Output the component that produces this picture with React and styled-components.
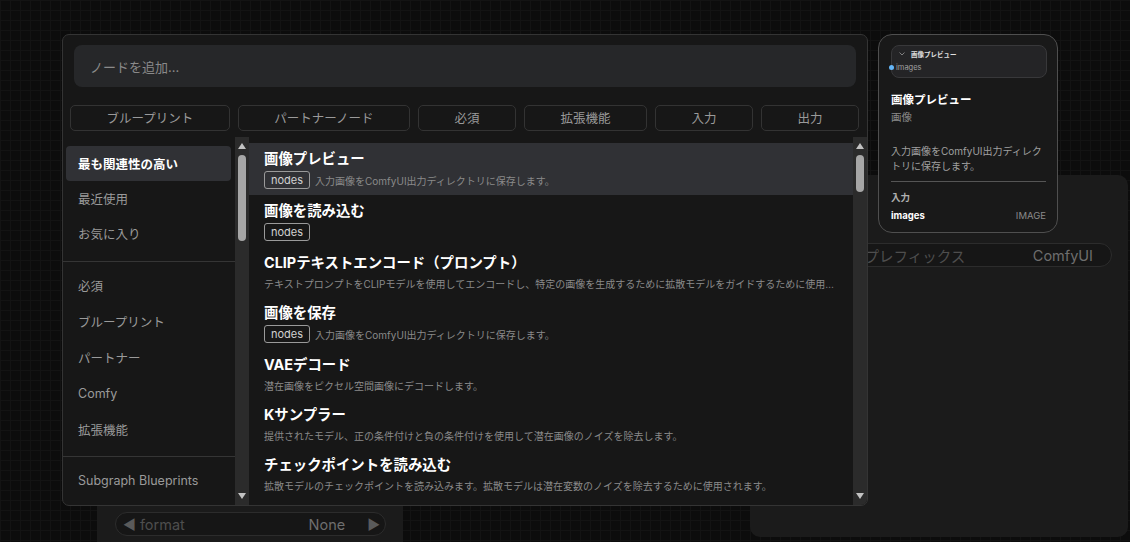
import styled, { createGlobalStyle } from 'styled-components';

const GlobalStyle = createGlobalStyle`
  html, body {
    margin: 0;
    padding: 0;
  }
  body {
    background-color: #0c0c0c;
    background-image:
      linear-gradient(#131313 1px, transparent 1px),
      linear-gradient(90deg, #131313 1px, transparent 1px);
    background-size: 10px 10px;
    font-family: Inter, "Noto Sans CJK JP", sans-serif;
    overflow: hidden;
  }
`;

const categoriesTop = ['最も関連性の高い', '最近使用', 'お気に入り'];
const categoriesMid = ['必須', 'ブループリント', 'パートナー', 'Comfy', '拡張機能'];
const filters = ['ブループリント', 'パートナーノード', '必須', '拡張機能', '入力', '出力'];

const results = [
  { title: '画像プレビュー', tag: 'nodes', desc: '入力画像をComfyUI出力ディレクトリに保存します。', active: true },
  { title: '画像を読み込む', tag: 'nodes' },
  {
    title: 'CLIPテキストエンコード（プロンプト）',
    desc: 'テキストプロンプトをCLIPモデルを使用してエンコードし、特定の画像を生成するために拡散モデルをガイドするために使用できます。',
  },
  { title: '画像を保存', tag: 'nodes', desc: '入力画像をComfyUI出力ディレクトリに保存します。' },
  { title: 'VAEデコード', desc: '潜在画像をピクセル空間画像にデコードします。' },
  { title: 'Kサンプラー', desc: '提供されたモデル、正の条件付けと負の条件付けを使用して潜在画像のノイズを除去します。' },
  {
    title: 'チェックポイントを読み込む',
    desc: '拡散モデルのチェックポイントを読み込みます。拡散モデルは潜在変数のノイズを除去するために使用されます。',
  },
];

const App = () => {
  return (
    <>
      <GlobalStyle />
      <Canvas>
        {/* nodes sitting on the graph behind the dialog */}
        <GraphNode $left={750} $top={175} $width={378} $height={362}>
          <WidgetPill $top={68} $left={34} $right={16}>
            <WidgetLabel>ファイル名プレフィックス</WidgetLabel>
            <WidgetValue>ComfyUI</WidgetValue>
          </WidgetPill>
        </GraphNode>
        <GraphNode $left={97} $top={470} $width={306} $height={100}>
          <WidgetPill $top={42} $left={18} $right={17}>
            <WidgetLabel>
              <Arrow>◀</Arrow> format
            </WidgetLabel>
            <WidgetValue $tight>
              None
              <Arrow>▶</Arrow>
            </WidgetValue>
          </WidgetPill>
        </GraphNode>

        <Dialog>
          <SearchBox>ノードを追加...</SearchBox>
          <FilterRow>
            {filters.map(f => (
              <FilterButton key={f}>{f}</FilterButton>
            ))}
          </FilterRow>
          <Body>
            <Sidebar>
              <CategoryGroup $top={9} $bottom={10} $gap={0}>
                {categoriesTop.map((c, i) => (
                  <CategoryItem key={c} $active={i === 0}>
                    {c}
                  </CategoryItem>
                ))}
              </CategoryGroup>
              <CategoryGroup $top={6} $bottom={9} $gap={1}>
                {categoriesMid.map(c => (
                  <CategoryItem key={c}>{c}</CategoryItem>
                ))}
              </CategoryGroup>
              <CategoryGroup $top={6} $bottom={0} $gap={0} $last>
                <CategoryItem>Subgraph Blueprints</CategoryItem>
              </CategoryGroup>
            </Sidebar>
            <ScrollTrack>
              <ArrowUp />
              <Thumb $height={86} />
              <Spacer />
              <ArrowDown />
            </ScrollTrack>
            <ResultList>
              {results.map(r => (
                <ResultItem key={r.title} $active={r.active}>
                  <ResultTitle>{r.title}</ResultTitle>
                  {(r.tag || r.desc) && (
                    <ResultMeta $tall={!!r.tag}>
                      {r.tag && <Tag>{r.tag}</Tag>}
                      {r.desc && <ResultDesc>{r.desc}</ResultDesc>}
                    </ResultMeta>
                  )}
                </ResultItem>
              ))}
            </ResultList>
            <ScrollTrack>
              <ArrowUp />
              <Thumb $height={37} />
              <Spacer />
              <ArrowDown />
            </ScrollTrack>
          </Body>
        </Dialog>

        <PreviewPanel>
          <MiniNode>
            <MiniHeader>
              <svg width="6" height="4" viewBox="0 0 6 4">
                <path d="M0.5 0.5 L3 3 L5.5 0.5" stroke="#8a8a8a" strokeWidth="0.9" fill="none" />
              </svg>
              <span>画像プレビュー</span>
            </MiniHeader>
            <MiniSlot>
              <SlotDot />
              <span>images</span>
            </MiniSlot>
          </MiniNode>
          <PreviewTitle>画像プレビュー</PreviewTitle>
          <PreviewCategory>画像</PreviewCategory>
          <PreviewDesc>入力画像をComfyUI出力ディレクトリに保存します。</PreviewDesc>
          <PreviewDivider />
          <PreviewSection>入力</PreviewSection>
          <InputRow>
            <InputName>images</InputName>
            <InputType>IMAGE</InputType>
          </InputRow>
        </PreviewPanel>
      </Canvas>
    </>
  );
};

const Canvas = styled.div`
  position: relative;
  width: 1130px;
  height: 542px;
  overflow: hidden;
`;

const GraphNode = styled.div`
  position: absolute;
  left: ${({ $left }) => $left}px;
  top: ${({ $top }) => $top}px;
  width: ${({ $width }) => $width}px;
  height: ${({ $height }) => $height}px;
  background: #1b1b1b;
  border-radius: 10px;
`;

const WidgetPill = styled.div`
  position: absolute;
  top: ${({ $top }) => $top}px;
  left: ${({ $left }) => $left}px;
  right: ${({ $right }) => $right}px;
  height: 24px;
  box-sizing: border-box;
  border: 1px solid #2c2c2c;
  border-radius: 12px;
  background: #161616;
  display: flex;
  align-items: center;
  justify-content: space-between;
  padding: 0 5px 0 7px;
  font-size: 14.5px;
`;

const WidgetLabel = styled.span`
  color: #4e4e4e;
`;

const WidgetValue = styled.span`
  display: flex;
  align-items: center;
  gap: 22px;
  color: #6e6e6e;
  padding-right: ${({ $tight }) => ($tight ? 0 : 13)}px;
`;

const Arrow = styled.span`
  color: #5a5a5a;
  font-size: 14px;
`;

const Dialog = styled.div`
  position: absolute;
  left: 62px;
  top: 34px;
  width: 806px;
  height: 472px;
  box-sizing: border-box;
  background: #171717;
  border: 1px solid #343434;
  border-radius: 7px;
  display: flex;
  flex-direction: column;
  overflow: hidden;
`;

const SearchBox = styled.div`
  margin: 10px 11px 0 11px;
  height: 42px;
  background: #262729;
  border-radius: 8px;
  display: flex;
  align-items: center;
  padding: 0 16px;
  font-size: 13px;
  color: #8a8a8a;
`;

const FilterRow = styled.div`
  display: flex;
  gap: 8px;
  margin: 18px 8px 0 7px;
  height: 26px;
`;

const FilterButton = styled.div`
  flex: 1 1 auto;
  box-sizing: border-box;
  border: 1px solid #333;
  border-radius: 5px;
  display: flex;
  align-items: center;
  justify-content: center;
  padding: 0 12px 2px;
  font-size: 12.5px;
  color: #9a9a9a;
  white-space: nowrap;
`;

const Body = styled.div`
  flex: 1;
  display: flex;
  margin-top: 6px;
  min-height: 0;
`;

const Sidebar = styled.div`
  width: 172px;
  display: flex;
  flex-direction: column;
`;

const CategoryGroup = styled.div`
  padding: ${({ $top }) => $top}px 4px ${({ $bottom }) => $bottom}px 3px;
  border-bottom: ${({ $last }) => ($last ? 'none' : '1px solid #353535')};
  display: flex;
  flex-direction: column;
  gap: ${({ $gap }) => $gap}px;
`;

const CategoryItem = styled.div`
  height: 35px;
  display: flex;
  align-items: center;
  padding-left: 12px;
  border-radius: 4px;
  font-size: 12.5px;
  color: ${({ $active }) => ($active ? '#ffffff' : '#9a9a9a')};
  font-weight: ${({ $active }) => ($active ? 700 : 400)};
  background: ${({ $active }) => ($active ? '#303135' : 'transparent')};
`;

const ScrollTrack = styled.div`
  width: 14px;
  flex-shrink: 0;
  background: #2b2b2b;
  display: flex;
  flex-direction: column;
  align-items: center;
  padding: 6px 0 6px;
  box-sizing: border-box;
`;

const ArrowUp = styled.div`
  width: 0;
  height: 0;
  border-left: 4.5px solid transparent;
  border-right: 4.5px solid transparent;
  border-bottom: 6px solid #c2c2c2;
`;

const ArrowDown = styled(ArrowUp)`
  border-bottom: none;
  border-top: 6px solid #c2c2c2;
`;

const Thumb = styled.div`
  margin-top: 6px;
  width: 8px;
  height: ${({ $height }) => $height}px;
  border-radius: 4px;
  background: #a6a6a6;
`;

const Spacer = styled.div`
  flex: 1;
`;

const ResultList = styled.div`
  flex: 1;
  min-width: 0;
  padding-top: 6px;
  display: flex;
  flex-direction: column;
`;

const ResultItem = styled.div`
  padding: 6px 14px 6px 15px;
  background: ${({ $active }) => ($active ? '#303135' : 'transparent')};
  display: flex;
  flex-direction: column;
  gap: 2px;
  min-width: 0;
`;

const ResultTitle = styled.div`
  font-size: 14.4px;
  line-height: 20px;
  font-weight: 700;
  color: #ffffff;
  white-space: nowrap;
`;

const ResultMeta = styled.div`
  height: ${({ $tall }) => ($tall ? 18 : 16)}px;
  display: flex;
  align-items: center;
  gap: 5px;
  min-width: 0;
`;

const Tag = styled.span`
  flex-shrink: 0;
  box-sizing: border-box;
  height: 18px;
  display: inline-flex;
  align-items: center;
  padding: 0 6px;
  border: 1px solid #9a9a9a;
  border-radius: 3px;
  font-size: 11px;
  color: #d2d2d2;
`;

const ResultDesc = styled.span`
  font-size: 10px;
  color: #8a8a8a;
  white-space: nowrap;
  overflow: hidden;
  text-overflow: ellipsis;
  min-width: 0;
`;

const PreviewPanel = styled.div`
  position: absolute;
  left: 878px;
  top: 34px;
  width: 180px;
  height: 199px;
  box-sizing: border-box;
  background: #191919;
  border: 1px solid #4f4f4f;
  border-radius: 14px;
  padding: 10px 10px 0 12px;
  display: flex;
  flex-direction: column;
`;

const MiniNode = styled.div`
  height: 33px;
  box-sizing: border-box;
  background: #242426;
  border: 1px solid #38383a;
  border-radius: 8px;
  display: flex;
  flex-direction: column;
  padding: 3px 0 0 7px;
`;

const MiniHeader = styled.div`
  display: flex;
  align-items: center;
  gap: 6px;
  height: 10px;
  font-size: 6.5px;
  font-weight: 700;
  color: #e0e0e0;
`;

const MiniSlot = styled.div`
  display: flex;
  align-items: center;
  gap: 2px;
  margin: 4px 0 0 -10px;
  font-size: 7.5px;
  color: #a0a0a0;
`;

const SlotDot = styled.span`
  width: 5px;
  height: 5px;
  border-radius: 50%;
  background: #64b5f6;
`;

const PreviewTitle = styled.div`
  margin-top: 14px;
  font-size: 11.5px;
  line-height: 16px;
  font-weight: 700;
  color: #ffffff;
`;

const PreviewCategory = styled.div`
  margin-top: 3px;
  font-size: 10.5px;
  line-height: 14px;
  color: #8a8a8a;
`;

const PreviewDesc = styled.div`
  margin-top: 19px;
  font-size: 10px;
  line-height: 15px;
  color: #a0a0a0;
  padding-right: 4px;
`;

const PreviewDivider = styled.div`
  margin-top: 7px;
  height: 1px;
  background: #555;
  margin-right: 1px;
`;

const PreviewSection = styled.div`
  margin-top: 9px;
  font-size: 9.5px;
  line-height: 14px;
  font-weight: 700;
  color: #b0b0b0;
`;

const InputRow = styled.div`
  margin-top: 4px;
  display: flex;
  justify-content: space-between;
  align-items: center;
  line-height: 14px;
  padding-right: 1px;
`;

const InputName = styled.span`
  font-size: 9.5px;
  font-weight: 700;
  color: #ffffff;
`;

const InputType = styled.span`
  font-size: 9.5px;
  color: #8a8a8a;
`;

export default App;
